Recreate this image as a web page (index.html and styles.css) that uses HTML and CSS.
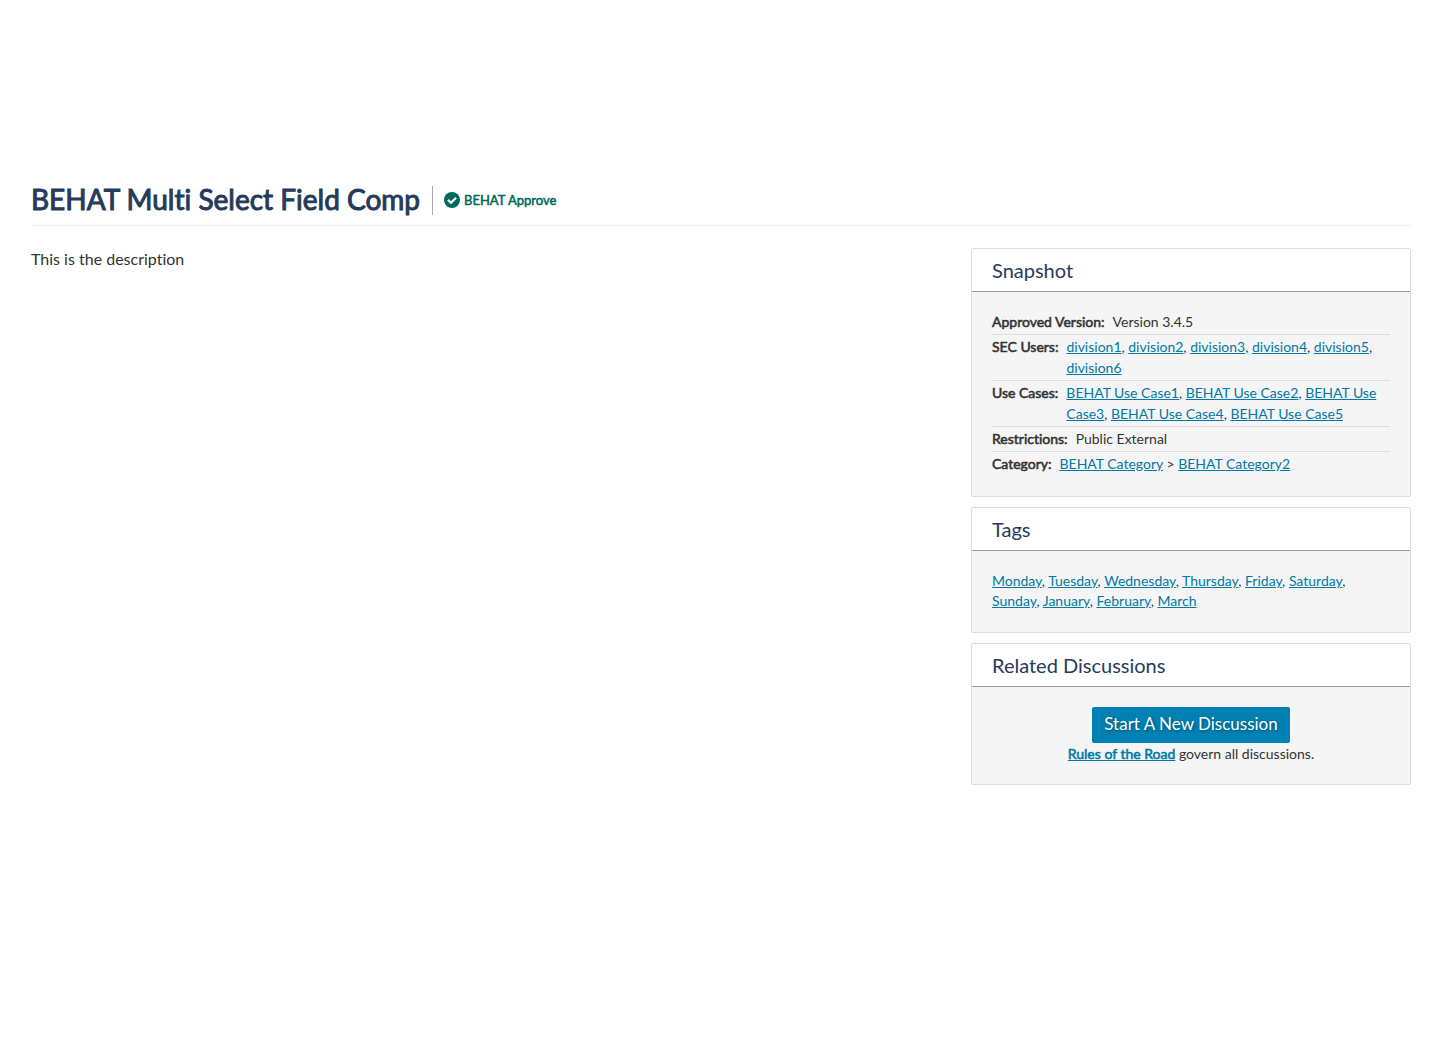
FILE: index.html
```html
<!DOCTYPE html>
<html lang="en">
<head>
<meta charset="utf-8">
<meta name="viewport" content="width=device-width, initial-scale=1">
<title>BEHAT Multi Select Field Comp</title>
<link rel="stylesheet" href="styles.css">
</head>
<body>
<main class="page">
  <header class="page-header">
    <h1 class="page-title">BEHAT Multi Select Field Comp</h1>
    <div class="status">
      <svg class="status-icon" viewBox="0 0 16 16" aria-hidden="true">
        <circle cx="8" cy="8" r="8" fill="currentColor"/>
        <path d="M3.9 7.9 7 10.8 12.1 5.7" fill="none" stroke="#fff" stroke-width="2.2"/>
      </svg>
      <span class="status-text">BEHAT Approve</span>
    </div>
  </header>
  <div class="columns">
    <p class="description">This is the description</p>
    <aside class="sidebar">
      <section class="panel">
        <h2 class="panel-title">Snapshot</h2>
        <div class="panel-body">
          <dl class="facts">
            <div class="fact"><dt>Approved Version:</dt><dd>Version 3.4.5</dd></div>
            <div class="fact"><dt>SEC Users:</dt><dd><a href="#">division1</a>, <a href="#">division2</a>, <a href="#">division3</a>, <a href="#">division4</a>, <a href="#">division5</a>, <a href="#">division6</a></dd></div>
            <div class="fact"><dt>Use Cases:</dt><dd><a href="#">BEHAT Use Case1</a>, <a href="#">BEHAT Use Case2</a>, <a href="#">BEHAT Use Case3</a>, <a href="#">BEHAT Use Case4</a>, <a href="#">BEHAT Use Case5</a></dd></div>
            <div class="fact"><dt>Restrictions:</dt><dd>Public External</dd></div>
            <div class="fact"><dt>Category:</dt><dd><a href="#">BEHAT Category</a> &gt; <a href="#">BEHAT Category2</a></dd></div>
          </dl>
        </div>
      </section>
      <section class="panel">
        <h2 class="panel-title">Tags</h2>
        <div class="panel-body tags">
          <a href="#">Monday</a>, <a href="#">Tuesday</a>, <a href="#">Wednesday</a>, <a href="#">Thursday</a>, <a href="#">Friday</a>, <a href="#">Saturday</a>, <a href="#">Sunday</a>, <a href="#">January</a>, <a href="#">February</a>, <a href="#">March</a>
        </div>
      </section>
      <section class="panel">
        <h2 class="panel-title">Related Discussions</h2>
        <div class="panel-body discussions">
          <button class="button" type="button">Start A New Discussion</button>
          <p class="rules"><a class="rules-link" href="#">Rules of the Road</a> govern all discussions.</p>
        </div>
      </section>
    </aside>
  </div>
</main>
</body>
</html>
```
FILE: styles.css
```css
* {
  box-sizing: border-box;
}

body {
  margin: 0;
  background: #fff;
  color: #333;
  font: 16px/22px Lato, sans-serif;
  font-variant-ligatures: none;
}

h1, h2, p, dl, dd {
  margin: 0;
  font-weight: 400;
}

a {
  color: #0079a6;
}

.page {
  padding: 180px 31px 40px;
}

.page-header {
  display: flex;
  align-items: center;
  padding-bottom: 5px;
  border-bottom: 1px solid #eee;
}

.page-title {
  padding-bottom: 2px;
  color: #263b5a;
  font-size: 28px;
  line-height: 38px;
  -webkit-text-stroke: 1px;
}

.status {
  display: flex;
  align-items: center;
  gap: 4px;
  height: 29px;
  margin-left: 12px;
  padding-left: 11px;
  border-left: 1px solid #aaa;
  color: #00695c;
  font-size: 13px;
}

.status-icon {
  width: 16px;
  height: 16px;
}

.status-text, dt, .rules-link {
  -webkit-text-stroke: 0.04em;
}

.columns {
  display: grid;
  grid-template-columns: minmax(0, 1fr) 440px;
  gap: 20px;
  align-items: start;
  padding-top: 22px;
}

.sidebar {
  display: grid;
  gap: 10px;
  font-size: 14px;
  line-height: 21px;
}

.panel {
  border: 1px solid #ddd;
  border-radius: 2px;
  background: #f5f5f5;
}

.panel-title {
  padding: 10px 20px;
  border-bottom: 1px solid #999;
  background: #fff;
  color: #263b5a;
  font-size: 20px;
  line-height: 22px;
}

.panel-body {
  padding: 20px;
}

.facts {
  margin-top: -2px;
}

.fact {
  display: flex;
  gap: 8px;
  padding: 1px 0 2px;
}

.fact + .fact {
  border-top: 1px solid #ddd;
}

dt {
  flex: none;
}

.tags {
  padding-bottom: 21px;
  line-height: 20px;
}

.discussions {
  text-align: center;
}

.button {
  display: block;
  margin: 0 auto;
  padding: 5px 12px 7px;
  border: 0;
  border-radius: 2px;
  background: #0080b3;
  color: #fff;
  font: 17px/24px Lato, sans-serif;
  text-shadow: 1px 1px 3px #0006;
}
```
